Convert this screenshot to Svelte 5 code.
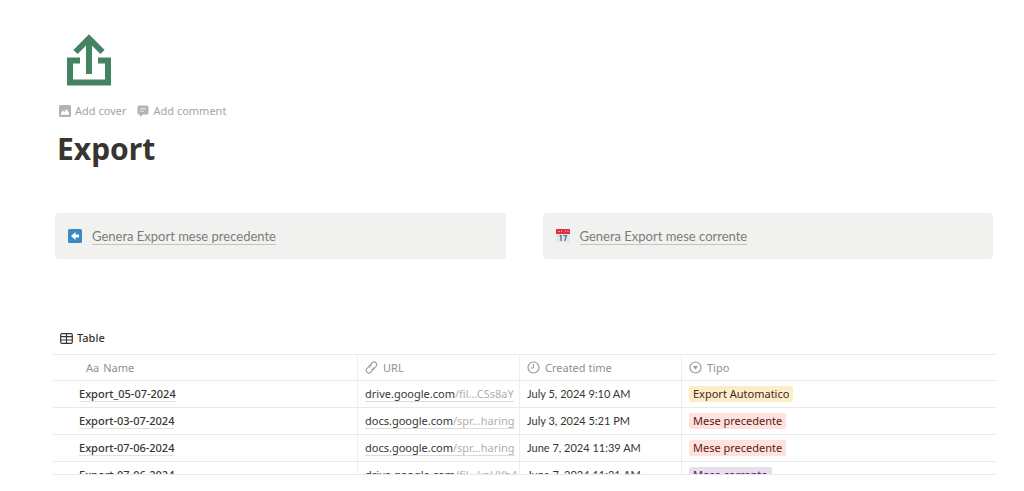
<script>
  const callouts = [
    { icon: "back", label: "Genera Export mese precedente" },
    { icon: "calendar", label: "Genera Export mese corrente" }
  ];

  const rows = [
    { name: "Export_05-07-2024", host: "drive.google.com", path: "/fil...CSs8aY", created: "July 5, 2024 9:10 AM", tipo: "Export Automatico", color: "yellow" },
    { name: "Export-03-07-2024", host: "docs.google.com", path: "/spr...haring", created: "July 3, 2024 5:21 PM", tipo: "Mese precedente", color: "red" },
    { name: "Export-07-06-2024", host: "docs.google.com", path: "/spr...haring", created: "June 7, 2024 11:39 AM", tipo: "Mese precedente", color: "red" },
    { name: "Export-07-06-2024", host: "drive.google.com", path: "/fil...knUYh4", created: "June 7, 2024 11:31 AM", tipo: "Mese corrente", color: "purple" }
  ];
</script>

<main class="page">
  <header class="header">
    <svg class="page-icon" viewBox="0 0 44 52" aria-hidden="true">
      <path d="M13 26.500H3v22h38v-22H31" fill="none" stroke="#448361" stroke-width="6" />
      <path d="M22 40V5M8.500 18L22 4.500 35.500 18" fill="none" stroke="#448361" stroke-width="6" />
    </svg>

    <div class="actions">
      <button class="action">
        <svg width="12" height="12" viewBox="0 0 12 12" aria-hidden="true">
          <rect width="12" height="12" rx="1.500" fill="#b4b3b0" />
          <path d="M2 9.700V8l2-2.500 1.300 1.400L7.500 4 10 7.500v2.200z" fill="#fff" />
        </svg>
        Add cover
      </button>
      <button class="action">
        <svg width="12" height="12" viewBox="0 0 12 12" aria-hidden="true">
          <path d="M2 .5h8A1.500 1.500 0 0 1 11.500 2v6A1.500 1.500 0 0 1 10 9.500H6L3 12V9.500H2A1.500 1.500 0 0 1 .5 8V2A1.500 1.500 0 0 1 2 .5z" fill="#b4b3b0" />
          <path d="M3 3.700h6M3 6.100h4" stroke="#fff" stroke-width=".8" />
        </svg>
        Add comment
      </button>
    </div>

    <h1>Export</h1>
  </header>

  <section class="callouts">
    {#each callouts as callout}
      <div class="callout">
        {#if callout.icon === "back"}
          <svg width="14" height="14" viewBox="0 0 14 14" aria-hidden="true">
            <rect width="14" height="14" rx="1.500" fill="#3b88c3" />
            <path d="M3 7l4.500-4v2.500H11v3H7.500V11z" fill="#fff" />
          </svg>
        {:else}
          <svg width="14" height="14" viewBox="0 0 14 14" aria-hidden="true">
            <path d="M0 4h14v8.500a1 1 0 0 1-1 1H1a1 1 0 0 1-1-1z" fill="#e1e8ed" />
            <path d="M0 1a1 1 0 0 1 1-1h12a1 1 0 0 1 1 1v4H0z" fill="#dd2e44" />
            <path d="M2.500 2.500h1.500M5 2.500h1M9 2h1.200M11.500 2.500h1" stroke="#f7b6be" />
            <path d="M3.500 7.300L5 6.500V12M7.300 6.700h3.200L8.600 12" fill="none" stroke="#66757f" stroke-width="1.300" />
          </svg>
        {/if}
        <a href="#{callout.icon}">{callout.label}</a>
      </div>
    {/each}
  </section>

  <section class="database">
    <button class="view">
      <svg width="13" height="11" viewBox="0 0 13 11" aria-hidden="true">
        <path d="M2 .7h9A1.300 1.300 0 0 1 12.300 2v7A1.300 1.300 0 0 1 11 10.300H2A1.300 1.300 0 0 1 .7 9V2A1.300 1.300 0 0 1 2 .7zM.7 3.700h11.600M.7 7h11.600M6.500.7v9.600" fill="none" stroke="#37352f" stroke-width="1.200" />
      </svg>
      Table
    </button>

    <div class="scroller">
      <table>
        <colgroup>
          <col class="col-name" />
          <col class="col-url" />
          <col class="col-created" />
          <col />
        </colgroup>
        <thead>
          <tr>
            <th class="name"><span class="head head--name"><span>Aa</span> Name</span></th>
            <th>
              <span class="head">
                <svg width="13" height="13" viewBox="0 0 13 13" aria-hidden="true">
                  <g fill="none" stroke="#9b9a97" stroke-width="1.100" stroke-linecap="round">
                    <path d="M4.600 6.300a2.700 2.700 0 0 1 .6-2.200l1.900-2.200a2.600 2.600 0 0 1 4 3.400L9.200 7.500a2.600 2.600 0 0 1-2.400.9" />
                    <path d="M8.400 6.700a2.700 2.700 0 0 1-.6 2.200l-1.900 2.200a2.600 2.600 0 0 1-4-3.400l1.900-2.200a2.600 2.600 0 0 1 2.400-.9" />
                  </g>
                </svg>
                URL
              </span>
            </th>
            <th>
              <span class="head">
                <svg width="13" height="13" viewBox="0 0 13 13" aria-hidden="true">
                  <circle cx="6.500" cy="6.500" r="5.500" fill="none" stroke="#9b9a97" stroke-width="1.200" />
                  <path d="M6.500 3v4H3.500" fill="none" stroke="#9b9a97" />
                </svg>
                Created time
              </span>
            </th>
            <th>
              <span class="head">
                <svg width="13" height="13" viewBox="0 0 13 13" aria-hidden="true">
                  <circle cx="6.500" cy="6.500" r="5.500" fill="none" stroke="#9b9a97" stroke-width="1.200" />
                  <path d="M4 5h5L6.500 8.700z" fill="#9b9a97" />
                </svg>
                Tipo
              </span>
            </th>
          </tr>
        </thead>
        <tbody>
          {#each rows as row}
            <tr>
              <td class="name"><a class="title" href="#{row.name}">{row.name}</a></td>
              <td><a class="url" href="https://{row.host}">{row.host}<span>{row.path}</span></a></td>
              <td class="created">{row.created}</td>
              <td><span class="tag tag--{row.color}">{row.tipo}</span></td>
            </tr>
          {/each}
        </tbody>
      </table>
    </div>
  </section>
</main>

<style>
  :global(body) {
    margin: 0;
    background: #fff;
  }

  .page {
    padding: 34px 28px 16px 53px;
    color: #37352f;
    font-family: "Noto Sans", "Liberation Sans", sans-serif;
    font-size: 11px;
    line-height: 16px;
  }

  button {
    display: flex;
    align-items: center;
    padding: 0;
    border: 0;
    background: none;
    color: inherit;
    font: inherit;
    cursor: pointer;
  }

  a {
    color: inherit;
    text-decoration: none;
  }

  svg {
    display: block;
    flex: none;
  }

  .header {
    padding-left: 4px;
  }

  .page-icon {
    width: 44px;
    height: 52px;
    margin-left: 10px;
  }

  .actions {
    display: flex;
    gap: 11px;
    margin-top: 17px;
    padding-left: 2px;
    color: #a5a4a1;
  }

  .action {
    gap: 4px;
  }

  h1 {
    margin: 10px 0 0;
    font-size: 30px;
    line-height: 40px;
  }

  .callouts {
    display: grid;
    grid-template-columns: 1fr 1fr;
    gap: 37px;
    margin: 44px 3px 0 2px;
  }

  .callout {
    display: flex;
    align-items: center;
    gap: 10px;
    height: 46px;
    padding: 0 13px;
    border-radius: 3px;
    background: #f1f1ef;
    color: #7d7c78;
    font-family: Lato, sans-serif;
    font-size: 13px;
  }

  .callout a {
    border-bottom: 1px solid #c4c3c0;
  }

  .database {
    margin-top: 71px;
  }

  .view {
    gap: 4px;
    padding-left: 7px;
    font-weight: 500;
  }

  .scroller {
    height: 119px;
    margin-top: 8px;
    border-top: 1px solid #e9e9e7;
    border-bottom: 1px solid #e9e9e7;
    overflow: hidden;
  }

  table {
    width: 100%;
    border-collapse: separate;
    border-spacing: 0;
    table-layout: fixed;
  }

  .col-name {
    width: 305px;
  }

  .col-url,
  .col-created {
    width: 162px;
  }

  th,
  td {
    box-sizing: border-box;
    height: 27px;
    padding: 0 7px;
    border-right: 1px solid #eeeeec;
    border-bottom: 1px solid #e9e9e7;
    text-align: left;
    white-space: nowrap;
  }

  th:last-child,
  td:last-child {
    border-right: 0;
  }

  th {
    height: 26px;
    color: #91908c;
    font-weight: normal;
  }

  td.name {
    padding-left: 26px;
  }

  th.name {
    padding-left: 33px;
  }

  .head {
    display: flex;
    align-items: center;
    gap: 5px;
  }

  .head--name {
    gap: 4px;
  }

  .title {
    border-bottom: 1px solid #e3e2e0;
    font-weight: 500;
  }

  .url {
    border-bottom: 1px solid #dcdbd9;
  }

  .url span {
    color: #b0afac;
  }

  .created {
    font-family: Lato, sans-serif;
  }

  .tag {
    display: inline-block;
    padding: 0 4px;
    border-radius: 2px;
  }

  .tag--yellow {
    background: #fdecc8;
    color: #402c1b;
  }

  .tag--red {
    background: #ffe2dd;
    color: #5d1715;
  }

  .tag--purple {
    background: #e8deee;
    color: #412454;
  }
</style>
